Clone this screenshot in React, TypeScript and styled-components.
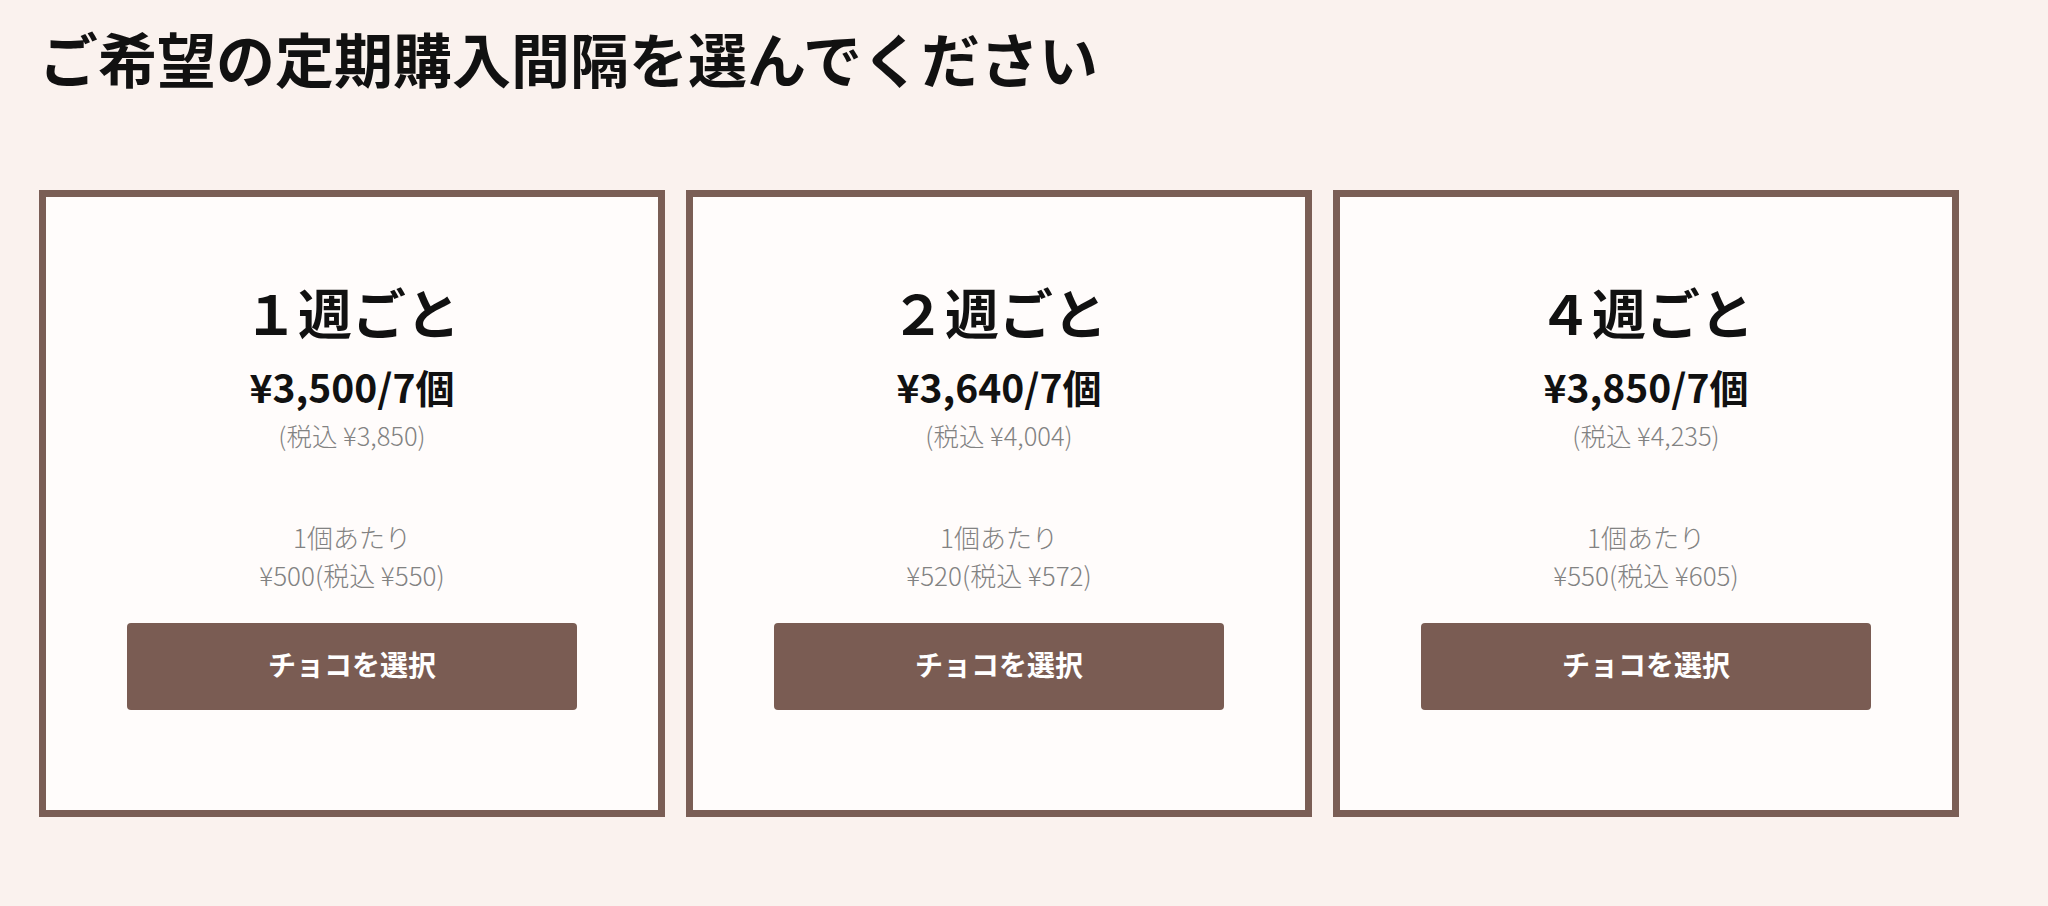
import React from 'react';
import styled, { createGlobalStyle } from 'styled-components';

const GlobalStyle = createGlobalStyle`
  html, body {
    margin: 0;
    padding: 0;
    background: #faf2ee;
  }
  body {
    font-family: "Noto Sans CJK JP", "Noto Sans", sans-serif;
    color: #111;
  }
`;

const Page = styled.div`
  padding: 16px 39px 40px;
`;

const Title = styled.h1`
  margin: 0;
  font-size: 59px;
  line-height: 83px;
  font-weight: 700;
  color: #111;
`;

const CardRow = styled.div`
  display: flex;
  gap: 21px;
  margin-top: 91px;
`;

const Card = styled.div`
  box-sizing: border-box;
  width: 626px;
  height: 627px;
  border: 7px solid #7a5e55;
  background: #fffcfb;
  display: flex;
  flex-direction: column;
  align-items: center;
  padding-top: 75px;
`;

const Interval = styled.div`
  font-size: 54px;
  line-height: 80px;
  font-weight: 700;
  color: #111;
`;

const Price = styled.div`
  margin-top: 6px;
  font-size: 39px;
  line-height: 56px;
  font-weight: 700;
  color: #111;
`;

const Small = styled.div<{ $gap?: number; $size?: number }>`
  margin-top: ${(p) => p.$gap ?? 0}px;
  font-size: ${(p) => p.$size ?? 25}px;
  line-height: 38px;
  font-weight: 300;
  color: #828282;
  text-align: center;
`;

const SelectButton = styled.button`
  margin-top: 29px;
  width: 450px;
  height: 87px;
  padding: 0 0 5px;
  border: none;
  border-radius: 4px;
  background: #7a5c53;
  color: #fff;
  font-family: "Noto Sans CJK JP", "Noto Sans", sans-serif;
  font-size: 28px;
  font-weight: 700;
  cursor: pointer;
`;

const plans = [
  { label: '１週ごと', price: '¥3,500/7個', tax: '(税込 ¥3,850)', unit: '¥500(税込 ¥550)' },
  { label: '２週ごと', price: '¥3,640/7個', tax: '(税込 ¥4,004)', unit: '¥520(税込 ¥572)' },
  { label: '４週ごと', price: '¥3,850/7個', tax: '(税込 ¥4,235)', unit: '¥550(税込 ¥605)' },
];

const App: React.FC = () => {
  return (
    <>
      <GlobalStyle />
      <Page>
        <Title>ご希望の定期購入間隔を選んでください</Title>
        <CardRow>
          {plans.map((plan) => (
            <Card key={plan.label}>
              <Interval>{plan.label}</Interval>
              <Price>{plan.price}</Price>
              <Small $gap={2} $size={25.5}>{plan.tax}</Small>
              <Small $gap={64} $size={26}>
                1個あたり
                <br />
                {plan.unit}
              </Small>
              <SelectButton>チョコを選択</SelectButton>
            </Card>
          ))}
        </CardRow>
      </Page>
    </>
  );
};

export default App;
